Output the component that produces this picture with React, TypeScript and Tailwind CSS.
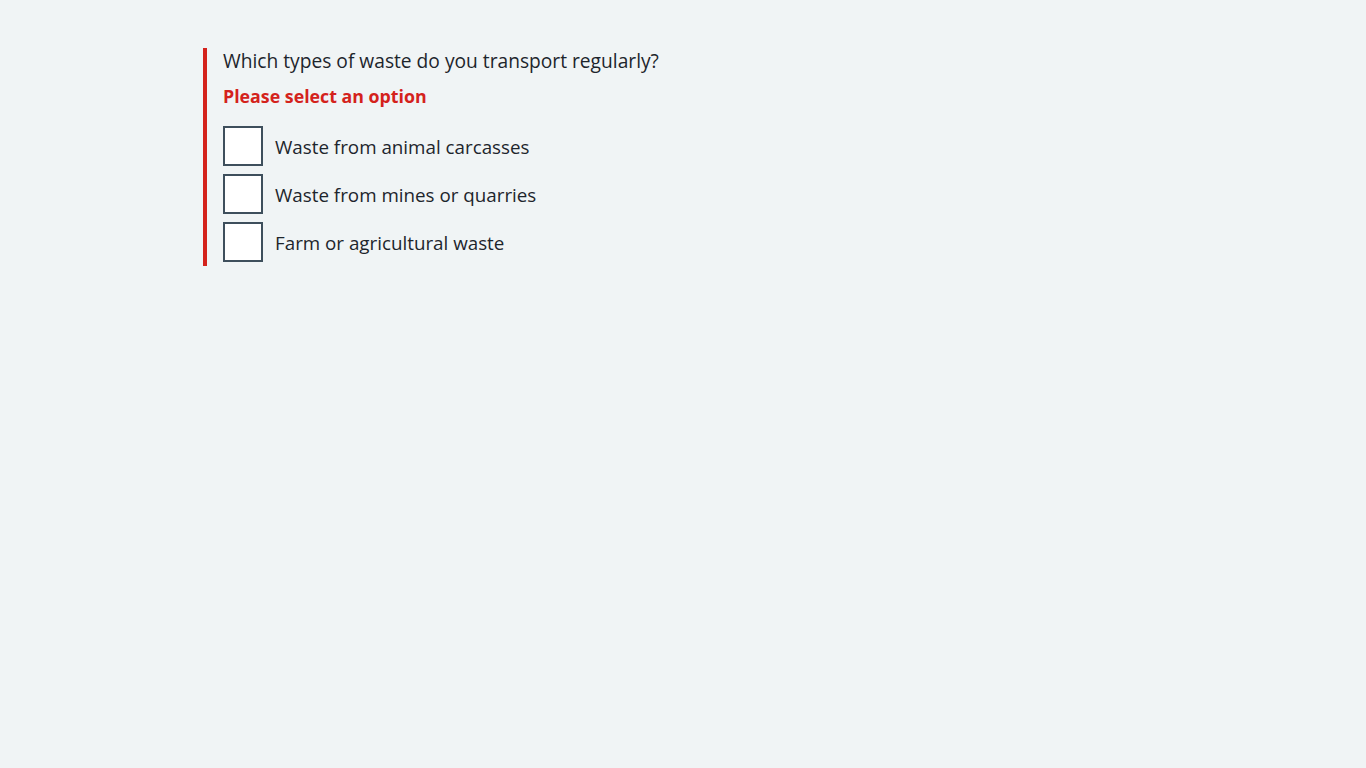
import { useState } from "react";

const options = [
  "Waste from animal carcasses",
  "Waste from mines or quarries",
  "Farm or agricultural waste",
];

export default function App() {
  const [checked, setChecked] = useState<string[]>([]);

  const toggle = (value: string) =>
    setChecked((prev) =>
      prev.includes(value) ? prev.filter((v) => v !== value) : [...prev, value]
    );

  return (
    <div
      className="min-h-screen w-full bg-[#f0f4f5] pt-12 pl-[203px] text-[#1d252c]"
      style={{ fontFamily: '"Open Sans", "Noto Sans", sans-serif' }}
    >
      <fieldset className="border-l-4 border-[#d4221c] pb-1 pl-4">
        <legend className="float-left w-full text-[19.2px] leading-[26px]">
          Which types of waste do you transport regularly?
        </legend>
        <p className="clear-both pt-[9px] text-[17.8px] leading-[26px] font-bold text-[#d4221c]">
          Please select an option
        </p>
        <div className="mt-[17px] flex flex-col gap-2">
          {options.map((option) => (
            <label key={option} className="flex cursor-pointer items-center gap-3">
              <span className="flex h-10 w-10 items-center justify-center border-2 border-[#3e4f5c] bg-white">
                <input
                  type="checkbox"
                  className="sr-only"
                  checked={checked.includes(option)}
                  onChange={() => toggle(option)}
                />
                {checked.includes(option) && (
                  <svg viewBox="0 0 24 24" className="h-6 w-6" fill="none" stroke="#1d252c" strokeWidth="3">
                    <path d="M4 12l5 5L20 6" />
                  </svg>
                )}
              </span>
              <span className="pt-[2px] text-[18.8px] leading-[26px]">{option}</span>
            </label>
          ))}
        </div>
      </fieldset>
    </div>
  );
}
